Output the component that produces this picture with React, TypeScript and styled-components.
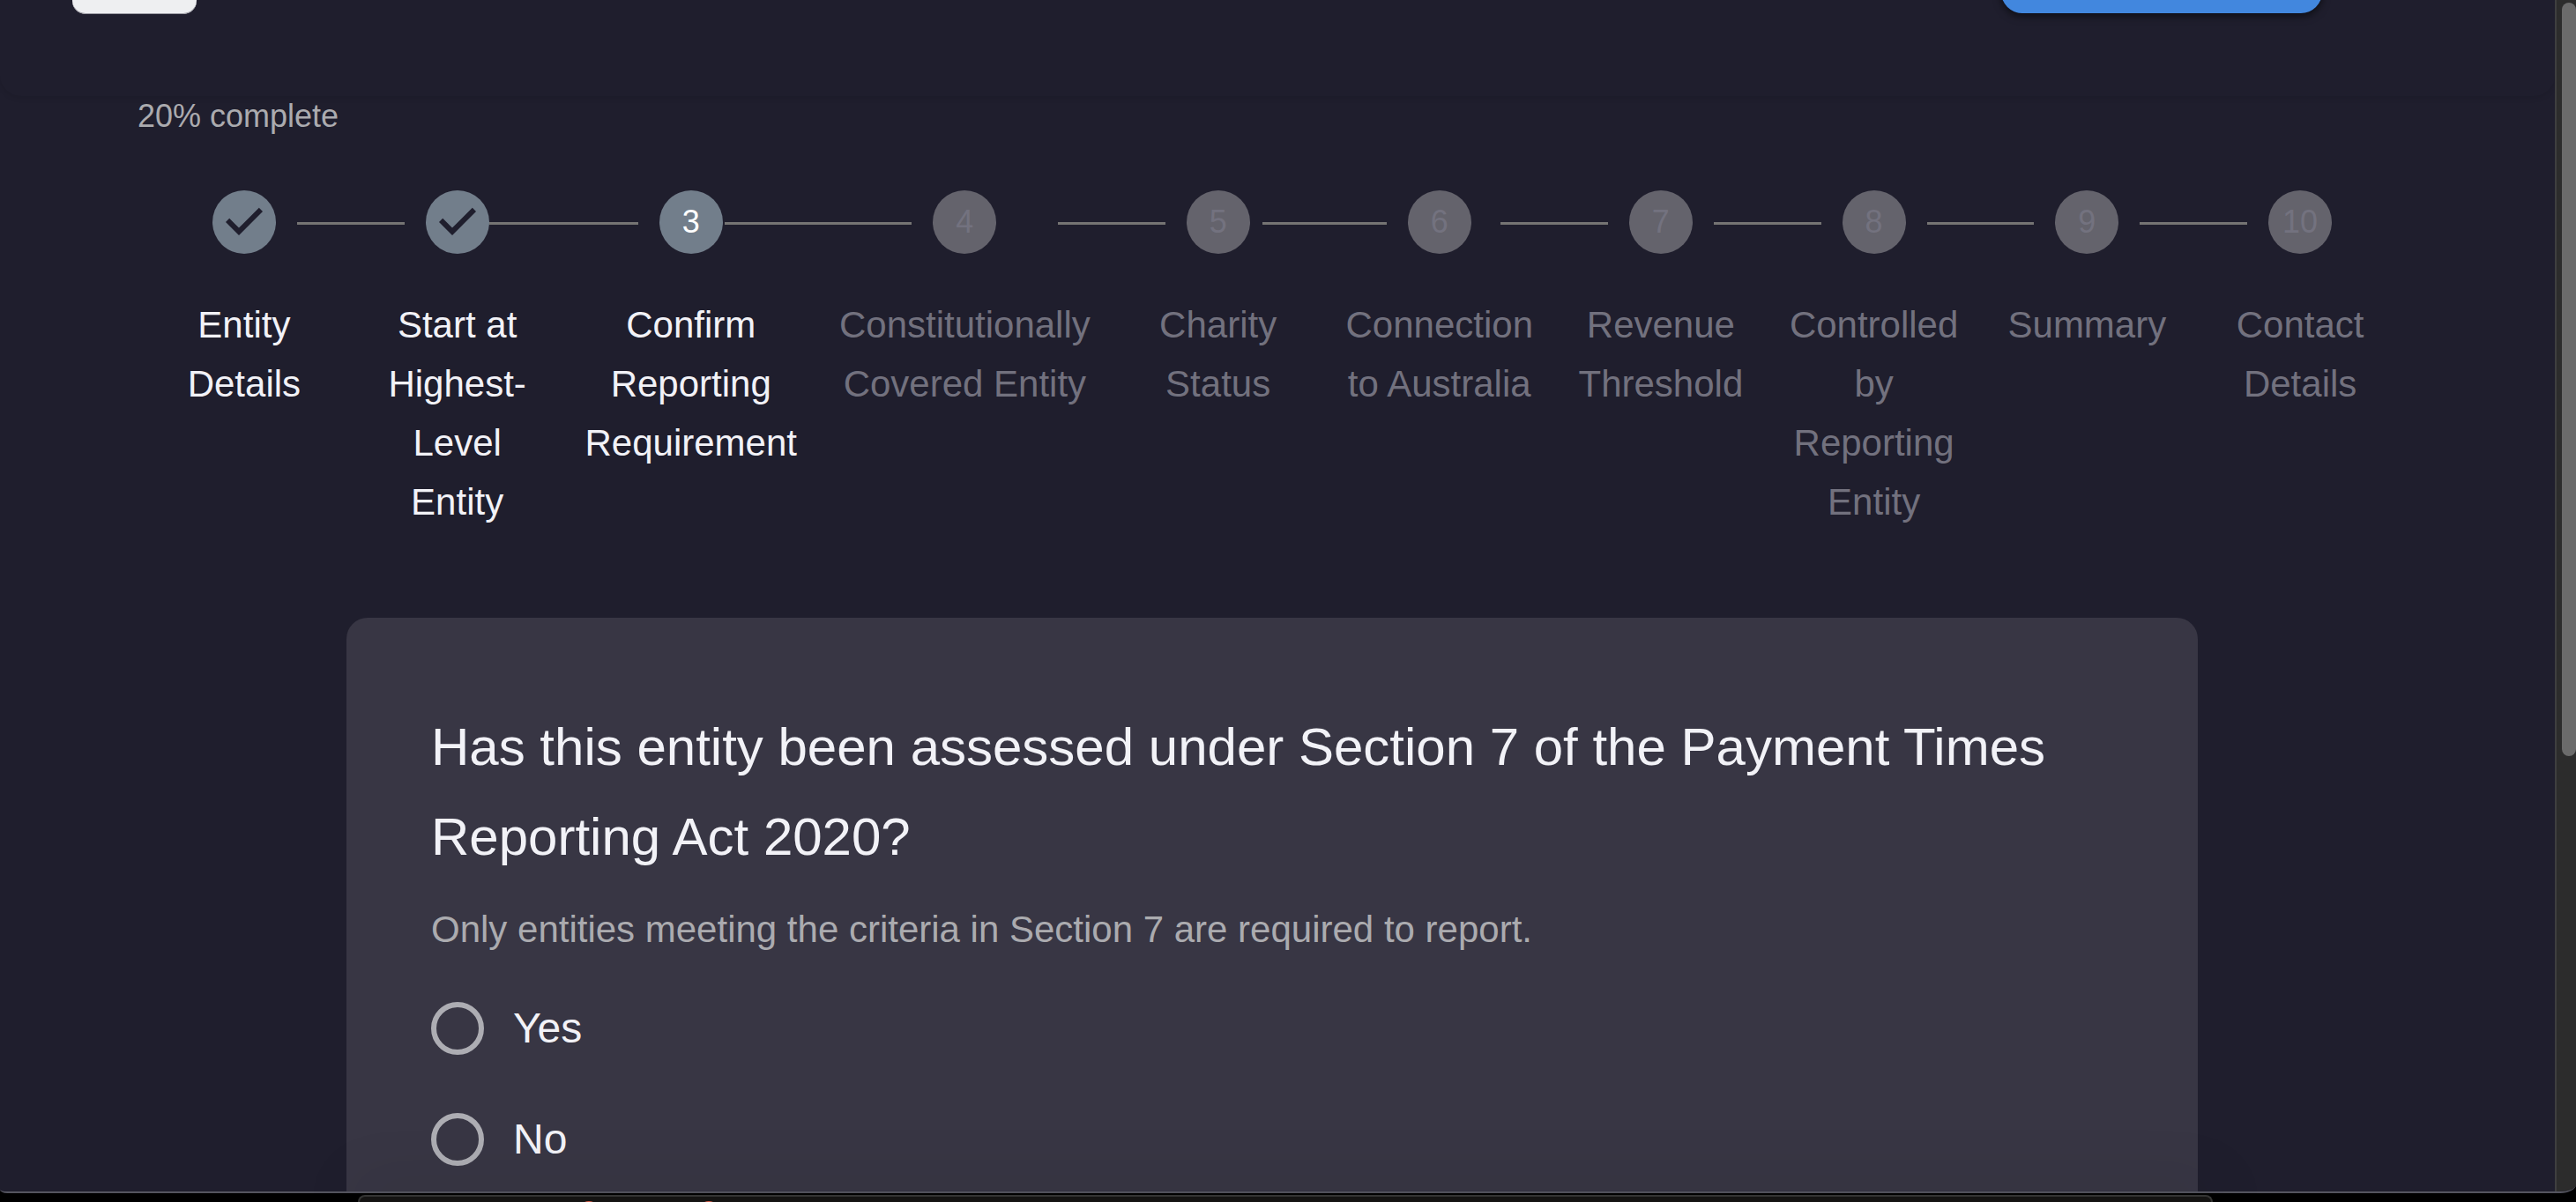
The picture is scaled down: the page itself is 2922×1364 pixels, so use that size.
import React, { useState } from "react";
import styled, { createGlobalStyle } from "styled-components";

const color = {
  page: "#1f1e2d",
  card: "#383644",
  text: "#f2f2f7",
  muted: "#ababaf",
  disabled: "#72717e",
  done: "#727e8b",
  pending: "#64636c",
  line: "#757473",
};

const GlobalStyle = createGlobalStyle`
  * { box-sizing: border-box; }
  body {
    margin: 0;
    background: #000;
    font-family: "Liberation Sans", Arial, Helvetica, sans-serif;
  }
`;

const Desktop = styled.div`
  display: flex;
  flex-direction: column;
  height: 100vh;
  overflow: hidden;
  background: #000;
`;

const Window = styled.div`
  flex: 1;
  min-height: 0;
  display: flex;
  overflow: hidden;
  background: ${color.page};
  border-bottom: 2px solid #54545f;
  border-radius: 0 0 18px 8px / 0 0 10px 4px;
`;

const Page = styled.div`
  flex: 1;
  min-width: 0;
  overflow: hidden;
  color: ${color.text};
`;

const ScrollTrack = styled.div`
  flex: none;
  width: 24px;
  padding: 3px 0 0 6px;
  background: #2c2c2c;
  border-left: 2px solid #3e3e3f;
`;

const ScrollThumb = styled.div`
  height: 855px;
  border-radius: 8px;
  background: #6b6b6b;
`;

const Header = styled.header`
  display: flex;
  justify-content: space-between;
  align-items: flex-start;
  height: 109px;
  padding: 0 264px 0 82px;
  border-radius: 0 0 24px 24px;
  box-shadow: 0 2px 6px rgba(0, 0, 0, 0.1);
`;

const HeaderButton = styled.button<{ $primary?: boolean }>`
  width: ${(p) => (p.$primary ? 364 : 141)}px;
  height: 60px;
  margin-top: ${(p) => (p.$primary ? -45 : -44)}px;
  border: 0;
  border-radius: ${(p) => (p.$primary ? 24 : 15)}px;
  background: ${(p) => (p.$primary ? "#4287de" : "#eeeff1")};
  box-shadow: ${(p) => (p.$primary ? "0 3px 10px rgba(0, 0, 0, 0.6)" : "inset 0 -1px 0 #9b9ba3")};
`;

const Main = styled.main`
  padding: 0 168px 0 156px;
`;

const Progress = styled.p`
  margin: 0 0 62px;
  font-size: 36px;
  line-height: 45px;
  color: ${color.muted};
`;

const Stepper = styled.ol`
  display: flex;
  margin: 0;
  padding: 0;
  list-style: none;
`;

type Status = "done" | "active" | "pending";

const StepItem = styled.li<{ $status: Status }>`
  position: relative;
  flex: 1 1 0;
  display: flex;
  flex-direction: column;
  align-items: center;
  gap: 47px;
  padding: 0 24px;
  color: ${(p) => (p.$status === "pending" ? color.disabled : color.text)};

  &:not(:first-child)::before {
    content: "";
    position: absolute;
    top: 36px;
    left: calc(-50% + 60px);
    right: calc(50% + 60px);
    height: 3px;
    background: ${color.line};
  }
`;

const StepBadge = styled.span<{ $status: Status }>`
  display: flex;
  align-items: center;
  justify-content: center;
  width: 72px;
  height: 72px;
  border-radius: 50%;
  font-size: 36px;
  line-height: 42px;
  background: ${(p) => (p.$status === "pending" ? color.pending : color.done)};
  color: ${(p) => (p.$status === "pending" ? "#73727f" : "#fff")};
`;

const StepLabel = styled.span`
  font-size: 42px;
  line-height: 67px;
  text-align: center;
`;

const Card = styled.form`
  max-width: 2100px;
  margin: 98px auto 0;
  padding: 96px;
  border-radius: 24px;
  background: ${color.card};
`;

const Question = styled.fieldset`
  min-width: 0;
  margin: 0;
  padding: 0;
  border: 0;
`;

const Title = styled.legend`
  padding: 0;
  font-size: 60px;
  line-height: 102px;
`;

const Hint = styled.p`
  margin: 20px 0 0;
  font-size: 42px;
  line-height: 67px;
  color: ${color.muted};
`;

const Options = styled.div`
  display: flex;
  flex-direction: column;
  align-items: flex-start;
  gap: 66px;
  margin-top: 49px;
`;

const Option = styled.label`
  display: flex;
  align-items: center;
  gap: 33px;
  font-size: 48px;
  line-height: 60px;
`;

const Radio = styled.input`
  appearance: none;
  flex: none;
  width: 60px;
  height: 60px;
  margin: 0;
  border: 6px solid #adadb3;
  border-radius: 50%;

  &:checked {
    background: radial-gradient(circle, ${color.text} 40%, transparent 44%);
  }
`;

const WindowBehind = styled.div`
  flex: none;
  position: relative;
  display: flex;
  gap: 112px;
  height: 8px;
  margin: 2px 412px 0 406px;
  padding: 5px 0 0 248px;
  overflow: hidden;
  border: solid #343433;
  border-width: 2px 2px 0;
  border-radius: 24px 24px 0 0;
  background: #151413;
  box-shadow: 0 0 70px 4px rgba(0, 0, 0, 0.22);
`;

const TabDot = styled.span`
  flex: none;
  width: 24px;
  height: 24px;
  border-radius: 50%;
  background: #d9604c;
`;

const steps = [
  "Entity Details",
  "Start at Highest-Level Entity",
  "Confirm Reporting Requirement",
  "Constitutionally Covered Entity",
  "Charity Status",
  "Connection to Australia",
  "Revenue Threshold",
  "Controlled by Reporting Entity",
  "Summary",
  "Contact Details",
];

const currentStep = 2;

const statusOf = (index: number): Status =>
  index < currentStep ? "done" : index === currentStep ? "active" : "pending";

const CheckIcon = () => (
  <svg width="72" height="72" viewBox="0 0 24 24" aria-hidden="true">
    <path fill={color.page} d="M10 17l-5-5 1.4-1.4 3.6 3.6 7.6-7.6L19 8l-9 9z" />
  </svg>
);

export default function App() {
  const [answer, setAnswer] = useState("");

  return (
    <Desktop>
      <GlobalStyle />
      <Window>
        <Page>
          <Header>
            <HeaderButton type="button" />
            <HeaderButton type="button" $primary />
          </Header>
          <Main>
            <Progress>20% complete</Progress>
            <Stepper>
              {steps.map((label, index) => {
                const status = statusOf(index);
                return (
                  <StepItem key={label} $status={status}>
                    <StepBadge $status={status}>
                      {status === "done" ? <CheckIcon /> : index + 1}
                    </StepBadge>
                    <StepLabel>{label}</StepLabel>
                  </StepItem>
                );
              })}
            </Stepper>
            <Card>
              <Question>
                <Title>
                  Has this entity been assessed under Section 7 of the Payment Times Reporting Act 2020?
                </Title>
                <Hint>Only entities meeting the criteria in Section 7 are required to report.</Hint>
                <Options>
                  {["Yes", "No"].map((option) => (
                    <Option key={option} htmlFor={`assessed-${option}`}>
                      <Radio
                        type="radio"
                        id={`assessed-${option}`}
                        name="assessed"
                        value={option}
                        checked={answer === option}
                        onChange={() => setAnswer(option)}
                      />
                      {option}
                    </Option>
                  ))}
                </Options>
              </Question>
            </Card>
          </Main>
        </Page>
        <ScrollTrack>
          <ScrollThumb />
        </ScrollTrack>
      </Window>
      <WindowBehind>
        <TabDot />
        <TabDot />
      </WindowBehind>
    </Desktop>
  );
}
